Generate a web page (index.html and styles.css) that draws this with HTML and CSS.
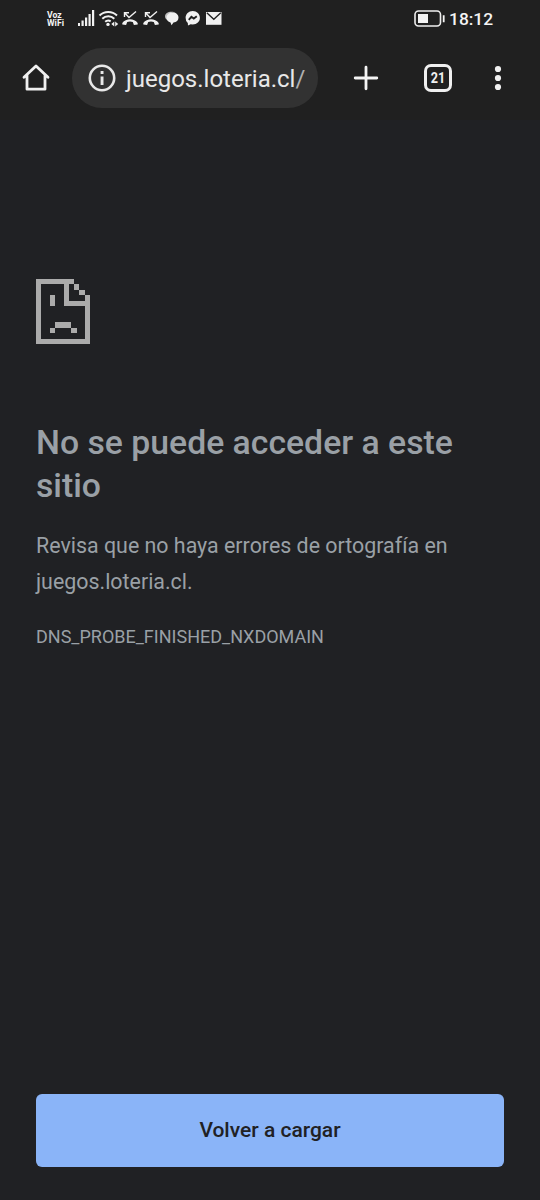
FILE: index.html
```html
<!DOCTYPE html>
<html lang="es">
<head>
<meta charset="utf-8">
<title>juegos.loteria.cl</title>
<link rel="stylesheet" href="styles.css">
</head>
<body>
<div class="screen">
  <header class="chrome">
    <div class="status">
      <div class="carrier"><span>Voz</span><span>WiFi</span></div>
      <svg class="status-icons" width="146" height="20" viewBox="78 8 146 20" fill="#f1f1f1">
        <path d="M78 23h2v3h-2zM81.500 20.500h2.200v5.500h-2.200zM85 17.500h2.200v8.500h-2.200zM88.500 14h2.200v12h-2.200zM92 10h2.200v16h-2.200z"/>
        <g fill="none" stroke="#f1f1f1" stroke-width="2">
          <path d="M99.500 15.500a12.500 12.500 0 0 1 17.500 0M102.300 18.800a8.500 8.500 0 0 1 12 0M105.200 21.800a4.500 4.500 0 0 1 5.500-.5"/>
        </g>
        <circle cx="108" cy="24.400" r="1.700"/>
        <path d="M114.300 21.500v5l-3-2.500zM115.200 21.500v5l3-2.500z"/>
        <g id="missed">
          <path d="M122.300 24.600v-1.700c3.700-4.900 11.700-4.900 15.400 0v1.700l-3.800.4-1.100-3c-1.700-.7-3.900-.7-5.600 0l-1.100 3z"/>
          <path d="M124.500 17v-4.300h4.500M124.800 13l4.200 4.500 7-6" fill="none" stroke="#f1f1f1" stroke-width="1.400"/>
        </g>
        <use href="#missed" x="21"/>
        <path d="M165 16.500c0-3 2.800-4.800 6.500-4.800 1.800 0 3 .3 4 .8-4.500-.4-8 1.400-8.500 5.500l.3 2c-1.500-.8-2.300-2-2.300-3.500z" fill="#bdbdbd"/>
        <path d="M166.500 17.800c0-3.200 2.700-5.200 6.200-5.200 3.400 0 5.800 2.100 5.800 5 0 2.900-2 4.600-5 5l-2 2.700-1-2.900c-2.500-.7-4-2.300-4-4.600z"/>
        <path d="M192.700 11c4.200 0 7.200 3 7.200 6.800s-3 6.700-7.200 6.700l-2.100-.3-2.600 1.300-.2-2.600a6.500 6.500 0 0 1-2.200-5.100c0-3.800 3-6.800 7.100-6.800z"/>
        <path d="m188.800 19.800 2.600-3.100 2.400 1.800 3-2.300" fill="none" stroke="#202020" stroke-width="1.900"/>
        <path d="M206 12h15.500v12.800H206z"/>
        <path d="m206.800 12.800 7 6.500 7-6.500" fill="none" stroke="#202020" stroke-width="1.300"/>
      </svg>
      <svg class="battery" width="32" height="18" viewBox="0 0 32 18">
        <rect x="1" y="1" width="25.500" height="15" rx="3.500" fill="none" stroke="#eee" stroke-width="1.600"/>
        <path d="M4 4h10v9H4zM28.800 5.300h1.800v7h-1.800z" fill="#f4f4f4"/>
      </svg>
      <span class="time">18:12</span>
    </div>
    <div class="toolbar">
      <svg class="home" width="28" height="28" viewBox="0 0 28 28" fill="none" stroke="#f0f0f0" stroke-width="2.800" stroke-linejoin="round" stroke-linecap="round">
        <path d="M2 13.300 14 2l12 11.300M5 11v14.200h18V11"/>
      </svg>
      <div class="address">
        <svg width="28" height="28" viewBox="0 0 28 28">
          <circle cx="14" cy="14" r="12.200" fill="none" stroke="#e8e8e8" stroke-width="2.600"/>
          <path d="M12.600 7h2.900v2.900h-2.900zM12.600 12.500h2.900V21h-2.900z" fill="#e8e8e8"/>
        </svg>
        <span class="url">juegos.loteria.cl<span class="slash">/</span></span>
      </div>
      <svg class="plus" width="26" height="26" viewBox="0 0 26 26">
        <path d="M13 2.200v21.600M2.200 13h21.600" stroke="#f4f4f4" stroke-width="2.800" stroke-linecap="round"/>
      </svg>
      <div class="tabs"><span>21</span></div>
      <svg class="menu" width="8" height="26" viewBox="0 0 8 26" fill="#f0f0f0">
        <circle cx="4" cy="4" r="3.100"/><circle cx="4" cy="13" r="3.100"/><circle cx="4" cy="22" r="3.100"/>
      </svg>
    </div>
  </header>
  <main class="page">
    <svg class="sad" width="54" height="65" viewBox="0 0 10 12" preserveAspectRatio="none" shape-rendering="crispEdges" fill="#ababab">
      <path d="M0 0h7v1H6.100v3H9v-1h1v9H0zM1 1v10h8V5H5.100V1z" fill-rule="evenodd"/>
      <path d="M7 1h1v1H7zM8 2h1v1H8zM2.500 3h1v2h-1zM3.500 8h3v1h-3zM2.500 9h1v1h-1zM6.500 9h1v1h-1z"/>
    </svg>
    <h1 class="title">No se puede acceder a este sitio</h1>
    <p class="message">Revisa que no haya errores de ortografía en juegos.loteria.cl.</p>
    <p class="code">DNS_PROBE_FINISHED_NXDOMAIN</p>
    <button class="reload">Volver a cargar</button>
  </main>
</div>
</body>
</html>
```
FILE: styles.css
```css
* { box-sizing: border-box; }
body { margin: 0; background: #202124; font-family: Roboto, "Liberation Sans", sans-serif; }
.screen { width: 540px; height: 1200px; display: flex; flex-direction: column; }
.chrome { height: 120px; background: #202020; }
.status { height: 36px; padding-left: 47px; display: flex; align-items: flex-start; color: #f4f4f4; }
.carrier { width: 31px; padding-top: 11px; display: flex; flex-direction: column; font-size: 8.7px; line-height: 8px; font-weight: 700; }
.status-icons { margin-top: 8px; }
.battery { margin: 10px 0 0 190px; }
.time { margin: 8px 0 0 3px; font-size: 17.400px; line-height: 22px; font-weight: 500; }
.toolbar { height: 84px; padding-left: 22px; display: flex; align-items: center; }
.home, .plus, .tabs, .menu { flex: none; }
.address { width: 246px; height: 60px; margin-left: 22px; padding-left: 16px; border-radius: 30px; background: #323232; display: flex; align-items: center; gap: 10px; }
.url { padding-top: 2px; font-size: 24px; line-height: 30px; color: #e8e8e8; white-space: nowrap; }
.slash { color: #b0b0b0; }
.plus { margin-left: 35px; }
.tabs { width: 28px; height: 28px; margin-left: 45px; border: 3px solid #f0f0f0; border-radius: 7px; color: #f0f0f0; font-size: 14px; line-height: 22px; font-weight: 700; text-align: center; }
.tabs span { display: inline-block; transform: scaleX(.9); }
.menu { margin-left: 42px; }
.page { flex: 1; padding: 159px 36px 33px; display: flex; flex-direction: column; color: #9aa0a6; }
.sad { flex: none; }
.title { margin: 77px 0 0; font-size: 33.75px; line-height: 43px; font-weight: 500; }
.message { margin: 21px 0 0; font-size: 21.4px; line-height: 36px; }
.code { margin: 23px 0 0; font-size: 18px; line-height: 28px; }
.reload { width: 100%; height: 73px; margin-top: auto; padding: 0 0 1px; border: 0; border-radius: 6px; background: #8ab4f8; color: #202124; font: 500 21px/28px Roboto, "Liberation Sans", sans-serif; }
```
